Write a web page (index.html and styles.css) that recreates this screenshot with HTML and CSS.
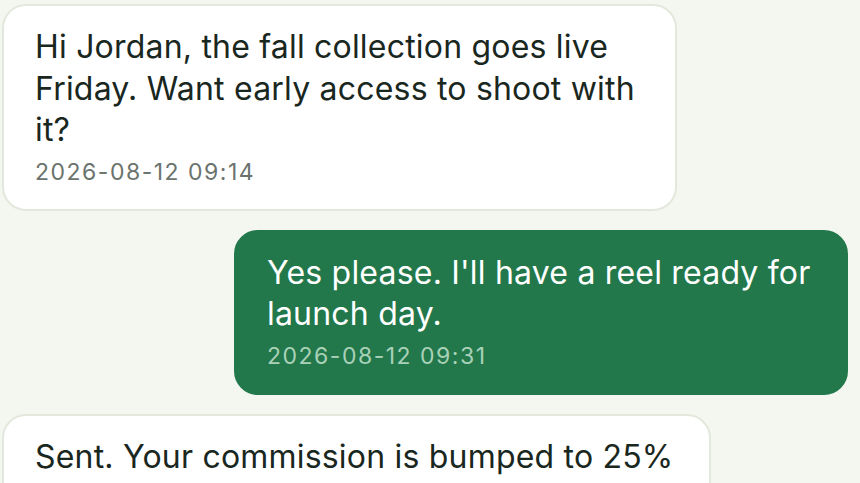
FILE: index.html
```html
<!DOCTYPE html>
<html lang="en">
<head>
<meta charset="utf-8">
<title>Chat</title>
<link rel="stylesheet" href="styles.css">
</head>
<body>
<main class="thread">
  <div class="bubble incoming narrow">
    <p class="text">Hi Jordan, the fall collection goes live Friday. Want early access to shoot with it?</p>
    <p class="time">2026-08-12 09:14</p>
  </div>
  <div class="bubble outgoing">
    <p class="text">Yes please. I'll have a reel ready for launch day.</p>
    <p class="time">2026-08-12 09:31</p>
  </div>
  <div class="bubble incoming">
    <p class="text">Sent. Your commission is bumped to 25% for launch week.</p>
    <p class="time">2026-08-12 09:40</p>
  </div>
</main>
</body>
</html>
```

FILE: styles.css
```css
html, body {
  margin: 0;
  padding: 0;
  background: #f4f6f0;
  overflow: hidden;
}
body {
  font-family: Inter, "Noto Sans", sans-serif;
  -webkit-font-smoothing: antialiased;
}
.thread {
  display: flex;
  flex-direction: column;
  gap: 19px;
  padding: 4px 12px 0 2px;
}
.bubble {
  box-sizing: border-box;
  max-width: 709px;
  border: 2px solid #e3e8dc;
  border-radius: 24px;
  padding: 20px 31px 21px;
}
.bubble.narrow {
  max-width: 675px;
}
.incoming {
  align-self: flex-start;
  background: #ffffff;
  color: #19271e;
}
.outgoing {
  align-self: flex-end;
  background: #22784b;
  border-color: #22784b;
  color: #ffffff;
  max-width: 614px;
}
.text {
  margin: 0;
  font-size: 32px;
  line-height: 1.3;
  letter-spacing: 0.2px;
}
.time {
  margin: 6px 0 0;
  font-size: 23px;
  line-height: 1.35;
  letter-spacing: 1.5px;
  color: #6b736d;
}
.outgoing .time {
  color: #a9d1b8;
}
```
